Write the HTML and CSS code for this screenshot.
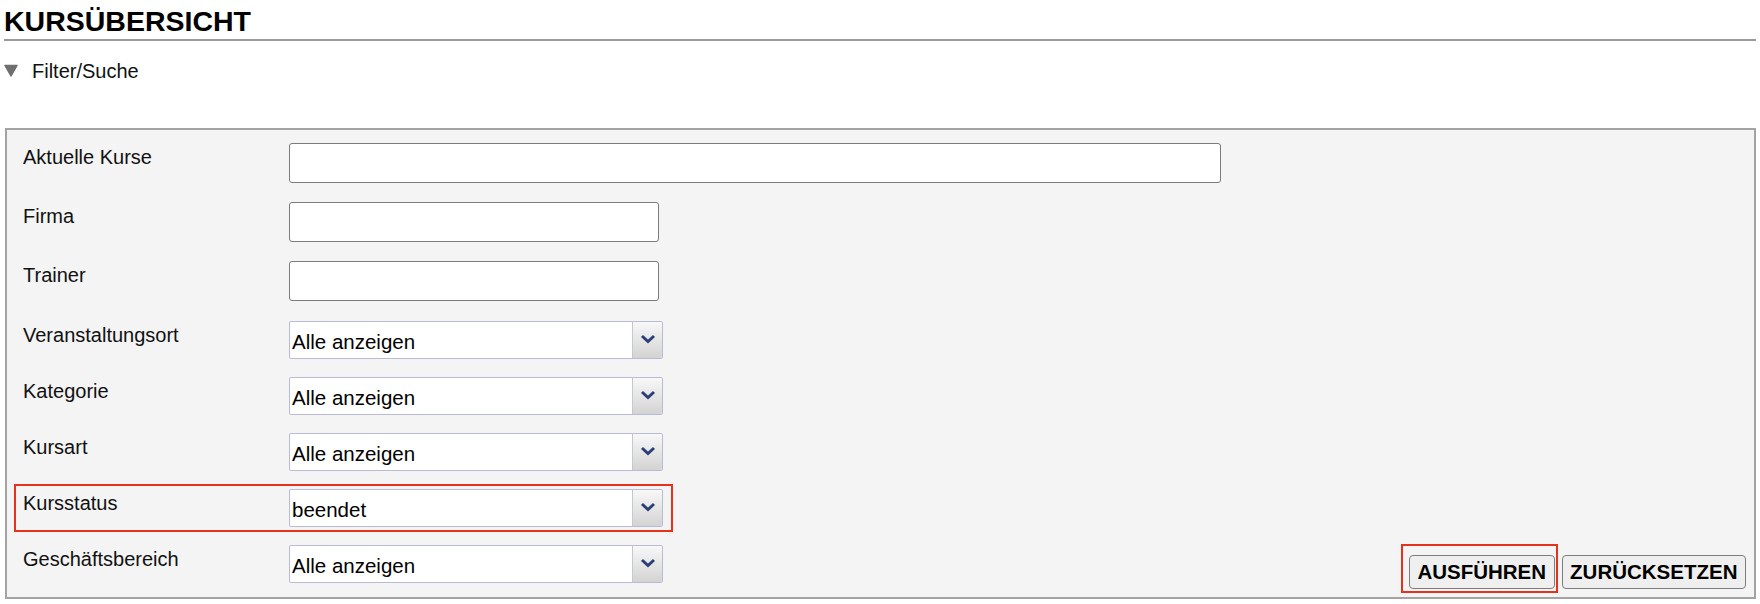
FILE: index.html
```html
<!DOCTYPE html>
<html lang="de">
<head>
    <meta charset="UTF-8">
    <meta name="viewport" content="width=device-width, initial-scale=1.0">
    <title>Kursübersicht</title>
    <link rel="stylesheet" href="styles.css">
</head>
<body>
    <div class="page">
        <h1 class="page-title">KURSÜBERSICHT</h1>

        <div class="filter-toggle">
            <svg class="toggle-icon" width="14" height="13" viewBox="0 0 14 13">
                <polygon points="1,1.5 13,1.5 7,12" fill="#6f6f6f" stroke="#6f6f6f" stroke-width="1.5" stroke-linejoin="round"/>
            </svg>
            <span>Filter/Suche</span>
        </div>

        <form class="filter-panel">
            <div class="filter-fields">
                <div class="field-row">
                    <label class="field-label">Aktuelle Kurse</label>
                    <input class="text-input text-input-wide" type="text">
                </div>
                <div class="field-row">
                    <label class="field-label">Firma</label>
                    <input class="text-input" type="text">
                </div>
                <div class="field-row field-row-last-text">
                    <label class="field-label">Trainer</label>
                    <input class="text-input" type="text">
                </div>
                <div class="field-row">
                    <label class="field-label">Veranstaltungsort</label>
                    <div class="select">
                        <span class="select-value">Alle anzeigen</span>
                        <span class="select-arrow"><svg width="16" height="10" viewBox="0 0 16 10"><path d="M2 2 L8 7.5 L14 2" fill="none" stroke="#2c3f78" stroke-width="3"/></svg></span>
                    </div>
                </div>
                <div class="field-row">
                    <label class="field-label">Kategorie</label>
                    <div class="select">
                        <span class="select-value">Alle anzeigen</span>
                        <span class="select-arrow"><svg width="16" height="10" viewBox="0 0 16 10"><path d="M2 2 L8 7.5 L14 2" fill="none" stroke="#2c3f78" stroke-width="3"/></svg></span>
                    </div>
                </div>
                <div class="field-row">
                    <label class="field-label">Kursart</label>
                    <div class="select">
                        <span class="select-value">Alle anzeigen</span>
                        <span class="select-arrow"><svg width="16" height="10" viewBox="0 0 16 10"><path d="M2 2 L8 7.5 L14 2" fill="none" stroke="#2c3f78" stroke-width="3"/></svg></span>
                    </div>
                </div>
                <div class="field-row field-row-marked">
                    <label class="field-label">Kursstatus</label>
                    <div class="select">
                        <span class="select-value">beendet</span>
                        <span class="select-arrow"><svg width="16" height="10" viewBox="0 0 16 10"><path d="M2 2 L8 7.5 L14 2" fill="none" stroke="#2c3f78" stroke-width="3"/></svg></span>
                    </div>
                </div>
                <div class="field-row">
                    <label class="field-label">Geschäftsbereich</label>
                    <div class="select">
                        <span class="select-value">Alle anzeigen</span>
                        <span class="select-arrow"><svg width="16" height="10" viewBox="0 0 16 10"><path d="M2 2 L8 7.5 L14 2" fill="none" stroke="#2c3f78" stroke-width="3"/></svg></span>
                    </div>
                </div>
            </div>

            <div class="filter-actions">
                <span class="btn-mark"><button class="btn" type="button">AUSFÜHREN</button></span>
                <button class="btn btn-reset" type="button">ZURÜCKSETZEN</button>
            </div>
        </form>
    </div>
</body>
</html>
```

FILE: styles.css
```css
:root {
    --panel-bg: #f4f4f4;
    --panel-border: #a3a3a3;
    --mark-red: #e5321c;
}

body {
    margin: 0;
    background: #fff;
    color: #111;
    font-family: 'Liberation Sans', Arial, sans-serif;
    font-size: 20px;
}

.page {
    padding: 0 4px;
}

.page-title {
    margin: 0;
    padding: 5px 0 2px 0;
    font-size: 28.5px;
    line-height: 32px;
    font-weight: bold;
    color: #000;
    border-bottom: 2px solid #9a9a9a;
}

.filter-toggle {
    display: flex;
    align-items: center;
    margin-top: 19px;
    line-height: 23px;
}

.toggle-icon {
    margin-left: 0;
    margin-top: -3px;
}

.filter-toggle span {
    margin-left: 14px;
}

.filter-panel {
    display: flex;
    justify-content: space-between;
    align-items: flex-end;
    margin: 45px 0 0 1px;
    padding: 10px 0 4px 0;
    background: var(--panel-bg);
    border: 2px solid var(--panel-border);
}

.filter-fields {
    padding-bottom: 7px;
}

.field-row {
    display: flex;
    align-items: flex-start;
    width: fit-content;
    margin: 0 0 12px 9px;
    padding: 3px 8px 3px 0;
}

.field-row:nth-child(1),
.field-row:nth-child(2) {
    margin-bottom: 13px;
}

.field-row-last-text {
    margin-bottom: 14px;
}

.field-row:last-child {
    margin-bottom: 0;
}

.field-row-marked {
    outline: 2px solid var(--mark-red);
}

.field-label {
    box-sizing: border-box;
    width: 273px;
    padding: 3px 0 0 7px;
    line-height: 23px;
}

.text-input {
    box-sizing: border-box;
    width: 370px;
    height: 40px;
    margin: 0;
    border: 1px solid #7b7b7b;
    border-radius: 3px;
    background: #fff;
    font: inherit;
}

.text-input-wide {
    width: 932px;
}

.select {
    box-sizing: border-box;
    display: flex;
    width: 374px;
    height: 38px;
    border: 1px solid #b9bbd5;
    border-radius: 2px;
    background: #fff;
}

.select-value {
    flex: 1;
    padding: 3px 0 0 2px;
    font-size: 20.5px;
    line-height: 33px;
    color: #000;
}

.select-arrow {
    display: flex;
    align-items: center;
    justify-content: center;
    width: 30px;
    padding-bottom: 3px;
    box-sizing: border-box;
    border-left: 1px solid #c5c7d9;
    border-radius: 0 2px 2px 0;
    background: linear-gradient(#f8f8f8, #d3d3d3);
}

.filter-actions {
    display: flex;
    align-items: flex-end;
    margin-right: 8px;
}

.btn-mark {
    display: flex;
    padding: 9px 1px 2px 6px;
    border: 2px solid var(--mark-red);
}

.btn {
    height: 34px;
    padding: 0 7.5px;
    border: 1px solid #7d7d7d;
    border-radius: 4px;
    background: #efefef;
    color: #000;
    font-family: 'Liberation Sans', Arial, sans-serif;
    font-size: 20.5px;
    font-weight: bold;
}

.btn-reset {
    margin: 0 0 4px 4px;
}
```
